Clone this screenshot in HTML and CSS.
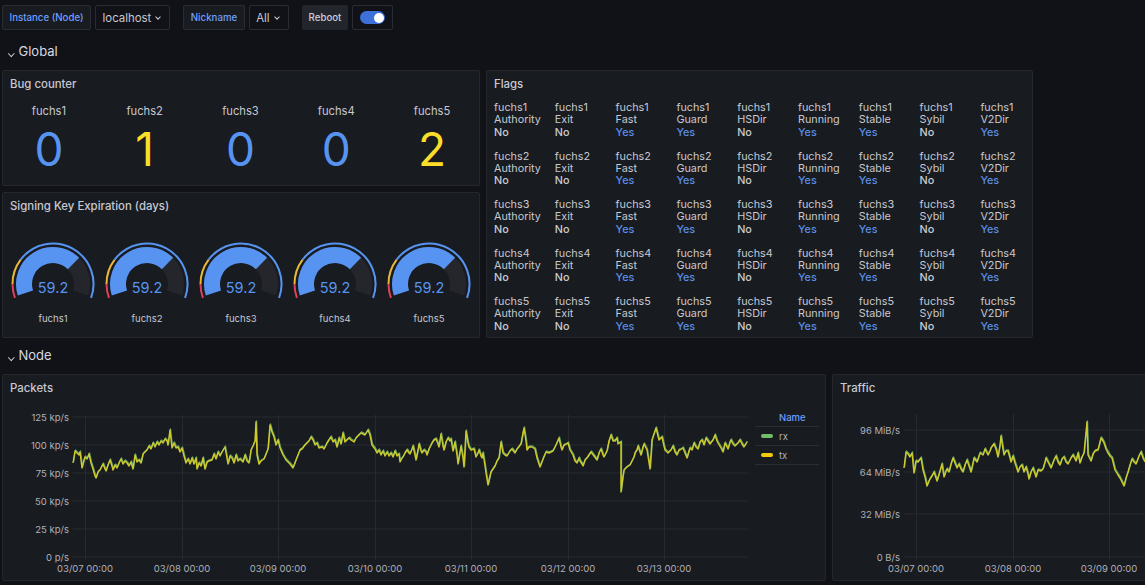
FILE: index.html
```html
<!DOCTYPE html>
<html>

<head>
    <meta charset="utf-8" />
    <title>Tor relays</title>
    <link rel="stylesheet" href="styles.css">
</head>

<body>
    <svg class="defs" width="0" height="0">
        <defs>
            <symbol id="gauge" viewBox="0 0 88 66">
                <path class="ring-rest" d="M64.51 23.49A29 29 0 0 1 71.58 52.96" />
                <path class="ring-value" d="M16.42 52.96A29 29 0 0 1 64.51 23.49" />
                <path class="limit-red" d="M5.94 57.85A40.5 40.5 0 0 1 3.5 44" />
                <path class="limit-yellow" d="M3.5 44A40.5 40.5 0 0 1 11.65 19.63" />
                <path class="limit-blue" d="M11.65 19.63A40.5 40.5 0 0 1 82.06 57.85" />
            </symbol>
            <polyline id="packets-line" points="73,463 75,451 77,453 79,455 80,452 82,468 84,460 85,457 87,459 89,454 91,463 93,469 95,476 96,478 98,472 100,470 102,466 103,464 105,469 106,471 108,465 110,460 112,466 113,470 115,465 117,468 119,463 121,459 123,464 125,461 127,463 129,466 131,462 133,469 135,455 137,462 139,460 141,463 143,454 145,452 147,450 149,446 151,449 153,443 155,447 157,442 159,445 161,441 163,443 165,439 167,441 168,445 170,430 172,448 174,443 176,448 178,447 180,452 182,448 184,456 186,463 188,459 190,464 192,458 194,464 196,458 197,469 199,463 201,466 203,458 205,469 207,462 209,461 212,460 214,454 216,459 218,452 220,456 222,452 225,447 228,464 230,456 232,458 234,463 236,455 238,461 240,459 243,462 245,455 247,461 249,463 251,450 253,446 255,441 256,422 257,455 259,464 261,461 264,459 266,454 268,449 270,425 272,432 274,437 276,445 278,440 280,448 283,455 286,460 290,464 293,468 296,460 298,455 300,450 302,449 305,445 307,443 309,441 311,437 313,440 315,445 317,443 319,448 322,447 324,449 327,443 329,440 331,437 333,442 335,440 337,447 339,438 341,444 343,433 345,442 347,440 349,438 351,440 354,442 356,438 358,436 361,433 365,435 368,430 370,435 372,445 375,449 377,453 379,450 381,455 383,451 385,456 387,452 389,456 391,453 393,457 395,451 397,456 399,454 400,462 402,458 403,457 405,453 407,450 409,453 410,454 412,449 413,446 415,455 416,460 418,450 419,444 421,451 422,453 424,450 426,452 427,455 429,449 432,443 434,440 436,439 438,444 439,447 441,434 443,446 444,450 446,442 448,438 450,441 451,439 453,451 455,442 457,455 458,464 460,452 461,446 463,458 464,467 466,431 468,443 469,447 471,450 474,449 476,457 478,453 479,450 481,456 482,458 483,453 485,466 486,473 488,485 490,476 491,472 493,469 495,466 497,461 499,458 501,442 503,453 505,455 507,456 510,451 512,449 515,453 517,449 518,448 521,444 523,433 524,428 526,441 527,450 529,447 532,447 535,449 537,458 540,467 543,459 546,452 549,453 553,451 556,445 559,438 561,447 562,450 564,445 565,445 568,443 570,450 573,455 575,461 577,463 579,458 580,461 582,464 583,466 585,460 587,458 589,455 591,452 594,456 597,460 599,453 601,449 603,455 604,457 606,453 607,451 609,441 611,435 613,441 615,441 617,438 618,444 621,442 621,492 623,476 624,470 627,467 630,465 632,461 634,457 635,453 637,450 638,446 640,452 641,455 643,447 644,444 646,448 647,450 650,469 652,440 654,434 656,428 658,436 659,440 662,437 664,446 665,450 668,453 671,450 673,446 675,452 677,455 679,450 680,450 683,448 685,453 687,458 689,451 690,448 692,450 694,443 696,447 698,449 700,442 702,440 704,445 706,438 708,441 710,444 713,440 715,435 717,441 718,443 721,448 723,452 725,443 727,447 728,449 730,442 731,440 733,444 735,446 738,443 740,440 742,444 744,447 747,442" />
            <polyline id="traffic-line" points="904,468 906,452 908,454 910,457 912,453 914,473 916,461 918,462 921,458 923,470 925,477 927,486 929,481 930,479 932,476 934,472 936,478 937,481 940,471 942,464 944,477 946,471 947,469 949,472 951,464 953,458 955,463 957,468 959,464 961,469 963,472 965,465 967,460 969,466 971,472 973,463 974,458 977,462 979,456 980,453 983,455 985,449 987,453 988,455 990,451 991,448 994,444 996,449 998,457 1000,445 1001,436 1003,449 1004,455 1006,451 1008,451 1010,458 1011,462 1013,456 1015,463 1018,472 1020,467 1022,465 1024,472 1026,467 1028,474 1029,479 1031,472 1033,468 1035,474 1036,477 1038,470 1041,471 1043,469 1045,462 1046,458 1049,464 1051,468 1054,460 1056,456 1058,462 1060,465 1062,459 1064,457 1066,462 1068,464 1071,458 1073,455 1076,461 1078,453 1080,463 1082,457 1084,453 1087,422 1088,455 1091,461 1093,454 1095,451 1098,450 1101,438 1103,441 1104,443 1106,449 1108,453 1110,456 1112,458 1115,470 1118,475 1120,478 1122,482 1124,486 1126,478 1128,472 1130,465 1132,459 1134,462 1136,464 1139,456 1141,452 1143,458 1145,462" />
        </defs>
    </svg>

    <div class="toolbar">
        <div class="var">
            <span class="var-label">Instance (Node)</span>
            <span class="var-select">localhost <i class="chev"></i></span>
        </div>
        <div class="var">
            <span class="var-label">Nickname</span>
            <span class="var-select">All <i class="chev"></i></span>
        </div>
        <div class="var">
            <span class="var-label plain">Reboot</span>
            <span class="var-select toggle-box"><span class="toggle"></span></span>
        </div>
    </div>

    <h2 class="row-title"><i class="chev big"></i>Global</h2>

    <div class="global">
        <section class="panel bugs">
            <h3>Bug counter</h3>
            <div class="stats">
                <div class="stat"><span>fuchs1</span><b class="blue">0</b></div>
                <div class="stat"><span>fuchs2</span><b class="yellow">1</b></div>
                <div class="stat"><span>fuchs3</span><b class="blue">0</b></div>
                <div class="stat"><span>fuchs4</span><b class="blue">0</b></div>
                <div class="stat"><span>fuchs5</span><b class="yellow">2</b></div>
            </div>
        </section>

        <section class="panel flags">
            <h3>Flags</h3>
            <div class="flag-grid">
                <div class="flag">fuchs1<br>Authority<b>No</b></div>
                <div class="flag">fuchs1<br>Exit<b>No</b></div>
                <div class="flag">fuchs1<br>Fast<b class="on">Yes</b></div>
                <div class="flag">fuchs1<br>Guard<b class="on">Yes</b></div>
                <div class="flag">fuchs1<br>HSDir<b>No</b></div>
                <div class="flag">fuchs1<br>Running<b class="on">Yes</b></div>
                <div class="flag">fuchs1<br>Stable<b class="on">Yes</b></div>
                <div class="flag">fuchs1<br>Sybil<b>No</b></div>
                <div class="flag">fuchs1<br>V2Dir<b class="on">Yes</b></div>

                <div class="flag">fuchs2<br>Authority<b>No</b></div>
                <div class="flag">fuchs2<br>Exit<b>No</b></div>
                <div class="flag">fuchs2<br>Fast<b class="on">Yes</b></div>
                <div class="flag">fuchs2<br>Guard<b class="on">Yes</b></div>
                <div class="flag">fuchs2<br>HSDir<b>No</b></div>
                <div class="flag">fuchs2<br>Running<b class="on">Yes</b></div>
                <div class="flag">fuchs2<br>Stable<b class="on">Yes</b></div>
                <div class="flag">fuchs2<br>Sybil<b>No</b></div>
                <div class="flag">fuchs2<br>V2Dir<b class="on">Yes</b></div>

                <div class="flag">fuchs3<br>Authority<b>No</b></div>
                <div class="flag">fuchs3<br>Exit<b>No</b></div>
                <div class="flag">fuchs3<br>Fast<b class="on">Yes</b></div>
                <div class="flag">fuchs3<br>Guard<b class="on">Yes</b></div>
                <div class="flag">fuchs3<br>HSDir<b>No</b></div>
                <div class="flag">fuchs3<br>Running<b class="on">Yes</b></div>
                <div class="flag">fuchs3<br>Stable<b class="on">Yes</b></div>
                <div class="flag">fuchs3<br>Sybil<b>No</b></div>
                <div class="flag">fuchs3<br>V2Dir<b class="on">Yes</b></div>

                <div class="flag">fuchs4<br>Authority<b>No</b></div>
                <div class="flag">fuchs4<br>Exit<b>No</b></div>
                <div class="flag">fuchs4<br>Fast<b class="on">Yes</b></div>
                <div class="flag">fuchs4<br>Guard<b class="on">Yes</b></div>
                <div class="flag">fuchs4<br>HSDir<b>No</b></div>
                <div class="flag">fuchs4<br>Running<b class="on">Yes</b></div>
                <div class="flag">fuchs4<br>Stable<b class="on">Yes</b></div>
                <div class="flag">fuchs4<br>Sybil<b>No</b></div>
                <div class="flag">fuchs4<br>V2Dir<b class="on">Yes</b></div>

                <div class="flag">fuchs5<br>Authority<b>No</b></div>
                <div class="flag">fuchs5<br>Exit<b>No</b></div>
                <div class="flag">fuchs5<br>Fast<b class="on">Yes</b></div>
                <div class="flag">fuchs5<br>Guard<b class="on">Yes</b></div>
                <div class="flag">fuchs5<br>HSDir<b>No</b></div>
                <div class="flag">fuchs5<br>Running<b class="on">Yes</b></div>
                <div class="flag">fuchs5<br>Stable<b class="on">Yes</b></div>
                <div class="flag">fuchs5<br>Sybil<b>No</b></div>
                <div class="flag">fuchs5<br>V2Dir<b class="on">Yes</b></div>
            </div>
        </section>

        <section class="panel signing">
            <h3>Signing Key Expiration (days)</h3>
            <div class="gauges">
                <div class="gauge"><svg viewBox="0 0 88 66"><use href="#gauge" /><text x="44" y="53">59.2</text></svg><span>fuchs1</span></div>
                <div class="gauge"><svg viewBox="0 0 88 66"><use href="#gauge" /><text x="44" y="53">59.2</text></svg><span>fuchs2</span></div>
                <div class="gauge"><svg viewBox="0 0 88 66"><use href="#gauge" /><text x="44" y="53">59.2</text></svg><span>fuchs3</span></div>
                <div class="gauge"><svg viewBox="0 0 88 66"><use href="#gauge" /><text x="44" y="53">59.2</text></svg><span>fuchs4</span></div>
                <div class="gauge"><svg viewBox="0 0 88 66"><use href="#gauge" /><text x="44" y="53">59.2</text></svg><span>fuchs5</span></div>
            </div>
        </section>
    </div>

    <h2 class="row-title"><i class="chev big"></i>Node</h2>

    <div class="node">
        <section class="panel packets">
            <h3>Packets</h3>
            <div class="chart-wrap">
                <svg class="chart" viewBox="3 399 750 181" width="750" height="181">
                    <g class="grid">
                        <path d="M73 417H748M73 445H748M73 473H748M73 501H748M73 529H748M73 557H748" />
                        <path d="M85.500 415V560M182.500 415V560M278.500 415V560M375.500 415V560M471.500 415V560M568.500 415V560M664.500 415V560" />
                    </g>
                    <g class="axis-y">
                        <text x="69" y="420.500">125 kp/s</text>
                        <text x="69" y="448.500">100 kp/s</text>
                        <text x="69" y="476.500">75 kp/s</text>
                        <text x="69" y="504.500">50 kp/s</text>
                        <text x="69" y="532.500">25 kp/s</text>
                        <text x="69" y="560.500">0 p/s</text>
                    </g>
                    <g class="axis-x">
                        <text x="85" y="572">03/07 00:00</text>
                        <text x="182" y="572">03/08 00:00</text>
                        <text x="278" y="572">03/09 00:00</text>
                        <text x="375" y="572">03/10 00:00</text>
                        <text x="471" y="572">03/11 00:00</text>
                        <text x="568" y="572">03/12 00:00</text>
                        <text x="664" y="572">03/13 00:00</text>
                    </g>
                    <use class="line rx" href="#packets-line" />
                    <use class="line tx" href="#packets-line" />
                </svg>
                <div class="legend">
                    <div class="legend-head">Name</div>
                    <div class="legend-row"><i class="swatch green"></i>rx</div>
                    <div class="legend-row"><i class="swatch gold"></i>tx</div>
                </div>
            </div>
        </section>

        <section class="panel traffic">
            <h3>Traffic</h3>
            <svg class="chart" viewBox="833 399 320 181" width="320" height="181">
                <g class="grid">
                    <path d="M904 430H1153M904 472H1153M904 514H1153M904 557H1153" />
                    <path d="M916.500 414V560M1013.500 414V560M1109.500 414V560" />
                </g>
                <g class="axis-y">
                    <text x="900" y="433.500">96 MiB/s</text>
                    <text x="900" y="475.500">64 MiB/s</text>
                    <text x="900" y="517.500">32 MiB/s</text>
                    <text x="900" y="560.500">0 B/s</text>
                </g>
                <g class="axis-x">
                    <text x="916" y="572">03/07 00:00</text>
                    <text x="1013" y="572">03/08 00:00</text>
                    <text x="1109" y="572">03/09 00:00</text>
                </g>
                <use class="line rx" href="#traffic-line" />
                <use class="line tx" href="#traffic-line" />
            </svg>
        </section>
    </div>
</body>

</html>
```

FILE: styles.css
```css
* {
  box-sizing: border-box;
}

body {
  margin: 0;
  padding: 5px 0 0 2px;
  width: 1145px;
  height: 585px;
  overflow: hidden;
  background: #111217;
  color: #c7c8d2;
  font-family: Inter, "Liberation Sans", sans-serif;
  font-size: 12px;
}

.defs {
  position: absolute;
}

/* top variable bar */
.toolbar {
  display: flex;
  gap: 13px;
  height: 25px;
  margin-bottom: 5px;
}

.var {
  display: flex;
  gap: 4px;
}

.var-label,
.var-select {
  display: flex;
  align-items: center;
  height: 25px;
  border: 1px solid #292c32;
  border-radius: 2px;
}

.var-label {
  padding: 0 6.500px;
  background: #181b1f;
  color: #6e9fff;
  font-size: 9.700px;
  font-weight: 500;
}

.var-label.plain {
  padding: 0 6px;
  border-color: #22252b;
  background: #22252b;
  color: #ccccdc;
}

.var-select {
  padding: 0 9px 0 6.500px;
  font-size: 11.400px;
  gap: 5px;
}

.toggle-box {
  width: 41px;
  padding: 0 7px;
}

.toggle {
  position: relative;
  display: block;
  width: 26px;
  height: 13px;
  border-radius: 7px;
  background: #3d71d9;
}

.toggle::after {
  content: "";
  position: absolute;
  top: 1.500px;
  right: 1px;
  width: 10px;
  height: 10px;
  border-radius: 50%;
  background: #fff;
}

.chev {
  display: inline-block;
  width: 4px;
  height: 4px;
  margin-top: -2px;
  border-right: 1px solid #ccccdc;
  border-bottom: 1px solid #ccccdc;
  transform: rotate(45deg);
}

.chev.big {
  width: 4.500px;
  height: 4.500px;
  margin: 0 5px 0 7px;
  vertical-align: 1px;
}

.row-title {
  margin: 0;
  height: 35px;
  line-height: 33px;
  font-size: 13px;
  font-weight: 400;
  color: #d8d9e0;
}

.global + .row-title {
  height: 36px;
  line-height: 34px;
}

/* panels */
.panel {
  background: #181b1f;
  border: 1px solid #24272c;
  border-radius: 2px;
  overflow: hidden;
}

.panel h3 {
  margin: 0;
  padding: 6px 7px 0;
  height: 24px;
  font-size: 11.400px;
  line-height: 14px;
  font-weight: 500;
}

.global {
  display: grid;
  grid-template-columns: 478px 547px;
  grid-template-rows: 116px 146px;
  gap: 6px;
}

.flags {
  grid-column: 2;
  grid-row: 1 / 3;
}

.signing {
  grid-column: 1;
  grid-row: 2;
}

.stats {
  display: grid;
  grid-template-columns: repeat(5, 95.800px);
  margin-left: -2px;
}

.stat {
  display: flex;
  flex-direction: column;
  align-items: center;
  padding-top: 9px;
}

.stat span {
  font-size: 11.200px;
  line-height: 14px;
}

.stat b {
  margin-top: 3px;
  font-size: 46px;
  line-height: 56px;
  font-weight: 400;
}

.blue {
  color: #5794f2;
}

.yellow {
  color: #fade2a;
}

.flag-grid {
  display: grid;
  grid-template-columns: repeat(9, 60.800px);
  grid-auto-rows: 48.500px;
  padding: 7px 7px 0;
}

.flag {
  font-size: 10.800px;
  line-height: 12.300px;
  white-space: nowrap;
}

.flag b {
  display: block;
  font-weight: 500;
  color: #c8cad0;
}

.flag b.on {
  color: #5b8ee6;
}

.gauges {
  display: grid;
  grid-template-columns: repeat(5, 94px);
  padding: 23px 0 0 3px;
}

.gauge {
  display: flex;
  flex-direction: column;
  align-items: center;
  width: 94px;
}

.gauge svg {
  display: block;
  width: 88px;
  height: 66px;
}

.gauge span {
  margin-top: 7px;
  font-size: 9.500px;
  line-height: 12px;
}

.gauge text {
  fill: #5794f2;
  font-size: 14.500px;
  text-anchor: middle;
}

.ring-rest,
.ring-value {
  fill: none;
  stroke-width: 16;
}

.ring-rest {
  stroke: #25262b;
}

.ring-value {
  stroke: #5794f2;
}

.limit-red,
.limit-yellow,
.limit-blue {
  fill: none;
  stroke-width: 2;
}

.limit-red {
  stroke: #e0405a;
}

.limit-yellow {
  stroke: #e8b93a;
}

.limit-blue {
  stroke: #5794f2;
}

/* graphs */
.node {
  display: flex;
  gap: 6px;
  height: 207px;
  width: 1200px;
}

.packets {
  flex: none;
  width: 824px;
}

.traffic {
  flex: none;
  width: 322px;
}

.chart-wrap {
  display: flex;
}

.chart {
  display: block;
  flex: none;
}

.grid path {
  fill: none;
  stroke: #272a2f;
  stroke-width: 1;
}

.axis-y text,
.axis-x text {
  fill: #b0b1ba;
  font-size: 9.500px;
}

.axis-y text {
  text-anchor: end;
}

.axis-x text {
  text-anchor: middle;
}

.line {
  fill: none;
  stroke-width: 1.400;
  stroke-linejoin: round;
}

.line.rx {
  stroke: #5d9c6a;
  transform: translate(0.500px, -1px);
}

.line.tx {
  stroke: #cfca2c;
}

.legend {
  width: 64px;
  margin: 9px 0 0 2px;
  font-size: 9.500px;
}

.legend-head {
  height: 19px;
  padding-left: 24px;
  line-height: 19px;
  color: #6e9fff;
  font-weight: 500;
  border-bottom: 1px solid #2a2d32;
}

.legend-row {
  display: flex;
  align-items: center;
  gap: 6px;
  height: 19px;
  padding-left: 6px;
  color: #b0b1ba;
  border-bottom: 1px solid #2a2d32;
}

.swatch {
  width: 12px;
  height: 3.500px;
  border-radius: 2px;
}

.swatch.green {
  background: #73bf69;
}

.swatch.gold {
  background: #f2cc0c;
}
```
